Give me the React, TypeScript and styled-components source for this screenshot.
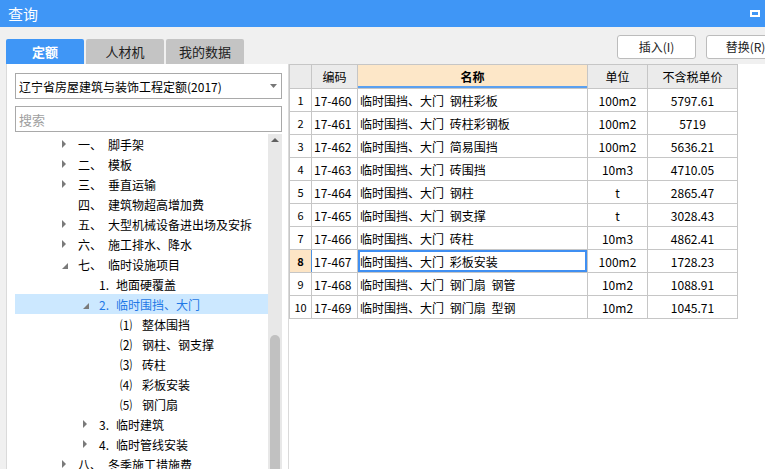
import React from 'react';
import styled, { createGlobalStyle } from 'styled-components';

const GlobalStyle = createGlobalStyle`
  html, body {
    margin: 0;
    padding: 0;
    width: 765px;
    height: 469px;
    overflow: hidden;
    background: #f0f0f0;
    font-family: "Noto Sans CJK SC", "Liberation Sans", sans-serif;
    font-size: 12px;
    color: #000;
  }
`;

const Page = styled.div`
  width: 765px;
  height: 469px;
  display: flex;
  flex-direction: column;
  overflow: hidden;
`;

const TitleBar = styled.div`
  height: 27px;
  flex-shrink: 0;
  background: #3f96f6;
  display: flex;
  align-items: center;
  justify-content: space-between;
  padding: 0 5px 0 8px;
  color: #fff;
  font-size: 15px;
`;

const RestoreIcon = styled.div`
  width: 6px;
  height: 3px;
  border: 2px solid #fff;
  margin-bottom: 1px;
`;

const Body = styled.div`
  flex: 1;
  display: flex;
  min-height: 0;
`;

const LeftColumn = styled.div`
  width: 283px;
  padding-left: 6px;
  display: flex;
  flex-direction: column;
  flex-shrink: 0;
`;

const Tabs = styled.div`
  display: flex;
  gap: 2px;
  margin-top: 12px;
  height: 25px;
`;

const Tab = styled.div<{ $active?: boolean }>`
  width: 78px;
  display: flex;
  align-items: center;
  justify-content: center;
  border-radius: 2px 2px 0 0;
  font-size: 13px;
  background: ${(p) => (p.$active ? '#3f96f6' : '#c4c4c4')};
  color: ${(p) => (p.$active ? '#fff' : '#222')};
  font-weight: ${(p) => (p.$active ? 'bold' : 'normal')};
`;

const Panel = styled.div`
  flex: 1;
  background: #fff;
  border-left: 1px solid #dadada;
  border-right: 1px solid #dadada;
  padding: 9px 6px 0 8px;
  display: flex;
  flex-direction: column;
  min-height: 0;
`;

const Field = styled.div`
  height: 24px;
  border: 1px solid #a9a9a9;
  display: flex;
  align-items: center;
  padding: 0 4px 0 3px;
  justify-content: space-between;
  flex-shrink: 0;
`;

const SearchField = styled(Field)`
  margin-top: 7px;
  color: #a0a0a0;
  font-size: 13px;
`;

const TreeArea = styled.div`
  margin-top: 2px;
  flex: 1;
  display: flex;
  min-height: 0;
  overflow: hidden;
`;

const TreeList = styled.div`
  flex: 1;
  display: flex;
  flex-direction: column;
`;

const TreeRow = styled.div<{ $level: number; $selected?: boolean }>`
  height: 20px;
  flex-shrink: 0;
  display: flex;
  align-items: center;
  padding-left: ${(p) => 47 + (p.$level - 1) * 21}px;
  background: ${(p) => (p.$selected ? '#cce8ff' : 'transparent')};
  color: ${(p) => (p.$selected ? '#1f78e6' : '#000')};
`;

const ArrowSlot = styled.div`
  width: 16px;
  height: 20px;
  display: flex;
  align-items: center;
  flex-shrink: 0;
`;

const TreeLabel = styled.span<{ $width: number }>`
  width: ${(p) => p.$width}px;
  flex-shrink: 0;
  white-space: nowrap;
`;

const TreeName = styled.span`
  white-space: nowrap;
`;

const ScrollTrack = styled.div`
  width: 14px;
  background: #e8e8e8;
  display: flex;
  flex-direction: column;
  align-items: center;
  flex-shrink: 0;
`;

const ScrollUp = styled.div`
  height: 12px;
  display: flex;
  align-items: center;
  justify-content: center;
`;

const ScrollThumb = styled.div`
  width: 10px;
  margin-top: 189px;
  flex: 1;
  background: #c1c1c1;
  border-radius: 5px 5px 0 0;
`;

const RightColumn = styled.div`
  flex: 1;
  display: flex;
  flex-direction: column;
  min-width: 0;
`;

const Toolbar = styled.div`
  height: 37px;
  flex-shrink: 0;
  display: flex;
  align-items: center;
  gap: 10px;
  padding-left: 328px;
  padding-top: 2px;
  box-sizing: border-box;
  white-space: nowrap;
`;

const Button = styled.div`
  width: 77px;
  height: 22px;
  flex-shrink: 0;
  background: #fff;
  border: 1px solid #bcbcbc;
  border-radius: 3px;
  display: flex;
  align-items: center;
  justify-content: center;
  font-size: 12px;
  color: #222;
`;

const GridArea = styled.div`
  flex: 1;
  background: #fff;
`;

const Table = styled.table`
  border-collapse: collapse;
  table-layout: fixed;
  width: 449px;
  border: 1px solid #c6c6c6;
`;

const HeadCell = styled.th<{ $current?: boolean }>`
  height: 23px;
  padding: 0;
  border: 1px solid #c6c6c6;
  background: ${(p) => (p.$current ? '#fde7c8' : '#ebebeb')};
  font-weight: ${(p) => (p.$current ? 'bold' : 'normal')};
  box-shadow: ${(p) => (p.$current ? 'inset 0 -2px 0 #5aa0f0' : 'none')};
  font-size: 12px;
  text-align: center;
`;

const Cell = styled.td<{ $align?: string; $focus?: boolean }>`
  height: 22px;
  padding: 0 2px;
  border: 1px solid #c6c6c6;
  text-align: ${(p) => p.$align || 'left'};
  white-space: nowrap;
  overflow: hidden;
  word-spacing: 3px;
  box-shadow: ${(p) => (p.$focus ? 'inset 0 0 0 2px #3f8ff2' : 'none')};
`;

const NumCell = styled(Cell)<{ $active?: boolean }>`
  padding: 0;
  text-align: center;
  font-size: 11px;
  background: ${(p) => (p.$active ? '#fde5c5' : '#fff')};
  font-weight: ${(p) => (p.$active ? 'bold' : 'normal')};
  border-right: ${(p) => (p.$active ? '1px solid #4a90e2' : '1px solid #c6c6c6')};
`;

const Collapsed = () => (
  <svg width="5" height="8" viewBox="0 0 5 8">
    <polygon points="0,0 4,4 0,8" fill="#7a7a7a" />
  </svg>
);

const Expanded = () => (
  <svg width="6" height="6" viewBox="0 0 6 6" style={{ marginTop: 3 }}>
    <polygon points="6,0 6,6 0,6" fill="#7a7a7a" />
  </svg>
);

type Node = {
  level: number;
  label: string;
  name: string;
  arrow?: 'collapsed' | 'expanded';
  selected?: boolean;
};

const tree: Node[] = [
  { level: 1, label: '一、', name: '脚手架', arrow: 'collapsed' },
  { level: 1, label: '二、', name: '模板', arrow: 'collapsed' },
  { level: 1, label: '三、', name: '垂直运输', arrow: 'collapsed' },
  { level: 1, label: '四、', name: '建筑物超高增加费' },
  { level: 1, label: '五、', name: '大型机械设备进出场及安拆', arrow: 'collapsed' },
  { level: 1, label: '六、', name: '施工排水、降水', arrow: 'collapsed' },
  { level: 1, label: '七、', name: '临时设施项目', arrow: 'expanded' },
  { level: 2, label: '1.', name: '地面硬覆盖' },
  { level: 2, label: '2.', name: '临时围挡、大门', arrow: 'expanded', selected: true },
  { level: 3, label: '⑴', name: '整体围挡' },
  { level: 3, label: '⑵', name: '钢柱、钢支撑' },
  { level: 3, label: '⑶', name: '砖柱' },
  { level: 3, label: '⑷', name: '彩板安装' },
  { level: 3, label: '⑸', name: '钢门扇' },
  { level: 2, label: '3.', name: '临时建筑', arrow: 'collapsed' },
  { level: 2, label: '4.', name: '临时管线安装', arrow: 'collapsed' },
  { level: 1, label: '八、', name: '冬季施工措施费', arrow: 'collapsed' },
];

const labelWidth: Record<number, number> = { 1: 30, 2: 17, 3: 22 };

const rows = [
  ['17-460', '临时围挡、大门 钢柱彩板', '100m2', '5797.61'],
  ['17-461', '临时围挡、大门 砖柱彩钢板', '100m2', '5719'],
  ['17-462', '临时围挡、大门 简易围挡', '100m2', '5636.21'],
  ['17-463', '临时围挡、大门 砖围挡', '10m3', '4710.05'],
  ['17-464', '临时围挡、大门 钢柱', 't', '2865.47'],
  ['17-465', '临时围挡、大门 钢支撑', 't', '3028.43'],
  ['17-466', '临时围挡、大门 砖柱', '10m3', '4862.41'],
  ['17-467', '临时围挡、大门 彩板安装', '100m2', '1728.23'],
  ['17-468', '临时围挡、大门 钢门扇 钢管', '10m2', '1088.91'],
  ['17-469', '临时围挡、大门 钢门扇 型钢', '10m2', '1045.71'],
];

export default function App() {
  return (
    <Page>
      <GlobalStyle />
      <TitleBar>
        <span>查询</span>
        <RestoreIcon />
      </TitleBar>
      <Body>
        <LeftColumn>
          <Tabs>
            <Tab $active>定额</Tab>
            <Tab>人材机</Tab>
            <Tab>我的数据</Tab>
          </Tabs>
          <Panel>
            <Field>
              <span>辽宁省房屋建筑与装饰工程定额(2017)</span>
              <svg width="7" height="4" viewBox="0 0 7 4">
                <polygon points="0,0 7,0 3.5,4" fill="#777" />
              </svg>
            </Field>
            <SearchField>搜索</SearchField>
            <TreeArea>
              <TreeList>
                {tree.map((n, i) => (
                  <TreeRow key={i} $level={n.level} $selected={n.selected}>
                    <ArrowSlot>
                      {n.arrow === 'collapsed' && <Collapsed />}
                      {n.arrow === 'expanded' && <Expanded />}
                    </ArrowSlot>
                    <TreeLabel $width={labelWidth[n.level]}>{n.label}</TreeLabel>
                    <TreeName>{n.name}</TreeName>
                  </TreeRow>
                ))}
              </TreeList>
              <ScrollTrack>
                <ScrollUp>
                  <svg width="8" height="4" viewBox="0 0 8 4">
                    <polygon points="0,4 8,4 4,0" fill="#606060" />
                  </svg>
                </ScrollUp>
                <ScrollThumb />
              </ScrollTrack>
            </TreeArea>
          </Panel>
        </LeftColumn>
        <RightColumn>
          <Toolbar>
            <Button>插入(I)</Button>
            <Button>替换(R)</Button>
          </Toolbar>
          <GridArea>
            <Table>
              <colgroup>
                <col style={{ width: 22 }} />
                <col style={{ width: 46 }} />
                <col style={{ width: 230 }} />
                <col style={{ width: 60 }} />
                <col style={{ width: 90 }} />
              </colgroup>
              <thead>
                <tr>
                  <HeadCell />
                  <HeadCell>编码</HeadCell>
                  <HeadCell $current>名称</HeadCell>
                  <HeadCell>单位</HeadCell>
                  <HeadCell>不含税单价</HeadCell>
                </tr>
              </thead>
              <tbody>
                {rows.map((r, i) => (
                  <tr key={r[0]}>
                    <NumCell $active={i === 7}>{i + 1}</NumCell>
                    <Cell>{r[0]}</Cell>
                    <Cell $focus={i === 7}>{r[1]}</Cell>
                    <Cell $align="center">{r[2]}</Cell>
                    <Cell $align="center">{r[3]}</Cell>
                  </tr>
                ))}
              </tbody>
            </Table>
          </GridArea>
        </RightColumn>
      </Body>
    </Page>
  );
}
